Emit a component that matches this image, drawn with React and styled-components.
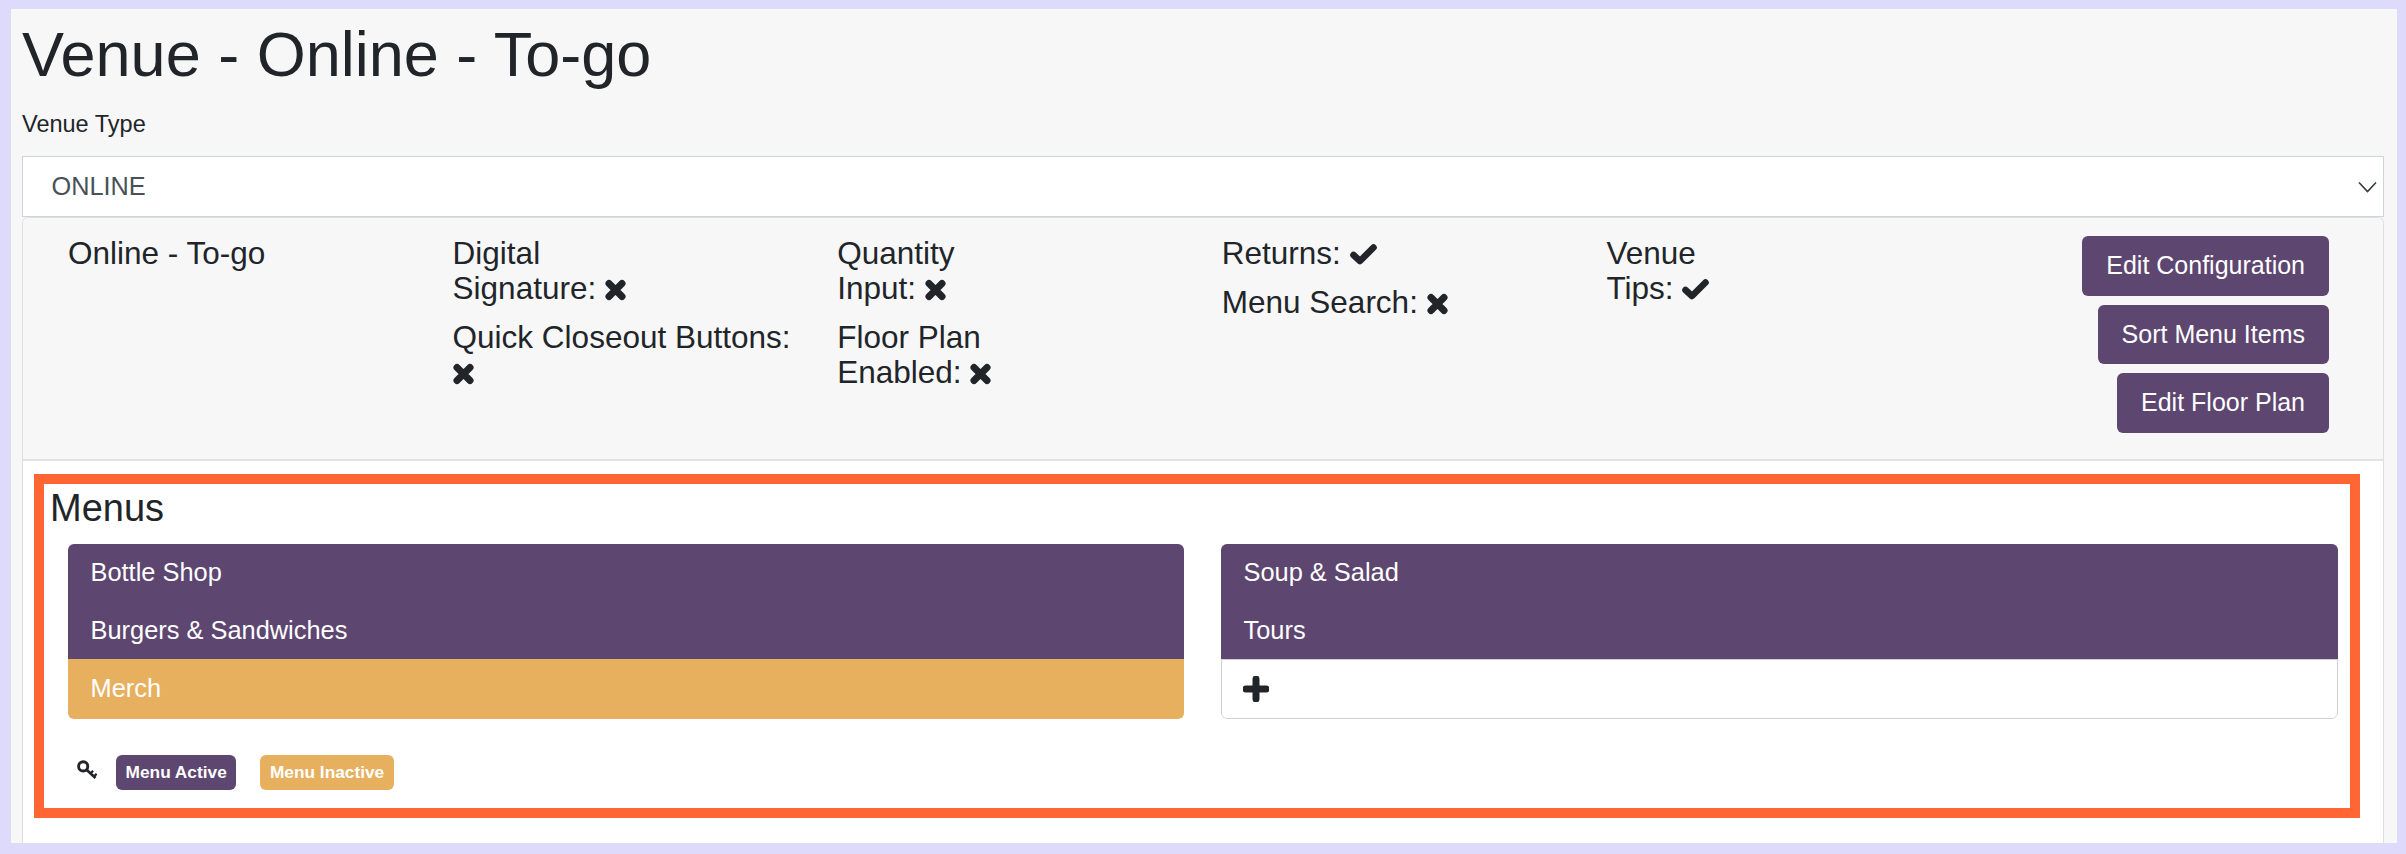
import styled, { createGlobalStyle } from "styled-components";

const GlobalStyle = createGlobalStyle`
  html, body {
    margin: 0;
    padding: 0;
  }
  body {
    font-family: "Liberation Sans", Arial, sans-serif;
    color: #212529;
  }
  * {
    box-sizing: border-box;
  }
`;

const purple = "#5d4670";
const gold = "#e7b05f";

// page frame
const Frame = styled.div`
  width: 2406px;
  height: 854px;
  overflow: hidden;
  border-style: solid;
  border-color: #dedafc;
  border-width: 9px 9px 11px 11px;
  background-color: #f7f7f7;
  padding: 7px 13px 0 11px;
  display: flex;
  flex-direction: column;
`;

const Title = styled.h1`
  margin: 0 0 14px;
  font-size: 63px;
  font-weight: 400;
  line-height: 77px;
`;

const Label = styled.label`
  display: block;
  font-size: 23.5px;
  line-height: 34px;
  margin-bottom: 15px;
`;

const Select = styled.div`
  height: 61px;
  flex-shrink: 0;
  background-color: #fff;
  border: 1.5px solid #ced4da;
  padding: 0 6px 0 28.5px;
  display: flex;
  align-items: center;
  justify-content: space-between;
  font-size: 25.3px;
  color: #495057;
`;

// venue card
const Card = styled.div`
  flex: 1;
  display: flex;
  flex-direction: column;
  background-color: #fff;
  border: 1px solid #dfdfdf;
  border-bottom: none;
  border-radius: 6px 6px 0 0;
`;

const CardHeader = styled.div`
  height: 243px;
  flex-shrink: 0;
  background-color: #f7f7f7;
  border-bottom: 2px solid #e2e2e2;
  border-radius: 6px 6px 0 0;
  padding: 18px 54px 0 45px;
  display: grid;
  grid-template-columns: repeat(4, 384.6px) 1fr auto;
`;

const Column = styled.div`
  display: flex;
  flex-direction: column;
  gap: 14px;
  font-size: 31.5px;
  line-height: 35px;
`;

const Setting = styled.div`
  white-space: nowrap;
`;

const Mark = styled.svg`
  vertical-align: ${(p) => p.$drop}px;
`;

const Actions = styled.div`
  display: flex;
  flex-direction: column;
  align-items: flex-end;
  gap: 9px;
`;

const ActionButton = styled.button`
  height: 59.5px;
  padding: 0 24px;
  border: none;
  border-radius: 6px;
  background-color: ${purple};
  color: #fff;
  font-family: inherit;
  font-size: 25px;
`;

const CardBody = styled.div`
  flex: 1;
  padding: 13px 23px 25px 11px;
`;

const Highlight = styled.section`
  height: 344px;
  border: 10px solid #ff6633;
  padding: 1px 13px 0 24px;
`;

const Heading = styled.h4`
  margin: 0 0 12px -18px;
  font-size: 38px;
  font-weight: 400;
  line-height: 47px;
`;

const Lists = styled.div`
  display: grid;
  grid-template-columns: 1116px 1117px;
  column-gap: 37px;
`;

const List = styled.ul`
  list-style: none;
  margin: 0;
  padding: 0;
  border-radius: 6px;
  overflow: hidden;
`;

const Item = styled.li`
  height: ${(p) => (p.$last ? "60px" : "57.5px")};
  padding: ${(p) => (p.$last ? "11px" : "10px")} 22.5px 0;
  font-size: 25.4px;
  line-height: 36px;
  color: #fff;
  background-color: ${(p) => (p.$inactive ? gold : purple)};
`;

const AddItem = styled.li`
  height: 60px;
  padding: 0 21px;
  display: flex;
  align-items: center;
  background-color: #fff;
  border: 1.5px solid #cfcfcf;
  border-top-width: 1px;
  border-radius: 0 0 6px 6px;
`;

const Legend = styled.div`
  display: flex;
  align-items: center;
  margin-top: 36px;
  padding-left: 9px;
`;

const KeyMark = styled.svg`
  margin-bottom: 5px;
`;

const Badge = styled.span`
  height: 35px;
  margin-left: ${(p) => p.$gap}px;
  padding: 0 9.6px;
  display: inline-flex;
  align-items: center;
  border-radius: 6px;
  background-color: ${(p) => (p.$inactive ? gold : purple)};
  color: #fff;
  font-size: 17.3px;
  font-weight: 700;
`;

const Chevron = () => (
  <svg width="19" height="12" viewBox="0 0 19 12" fill="none">
    <path d="M1 1.5l8.5 9 8.5-9" stroke="#343a40" strokeWidth="1.6" />
  </svg>
);

const KeyIcon = () => (
  <KeyMark width="20" height="20" viewBox="0 0 20 20" fill="none" stroke="#212529">
    <circle cx="6.2" cy="6.4" r="4.6" strokeWidth="2.9" />
    <path d="M9.5 9.8l9 8.2" strokeWidth="2.7" />
    <path d="M13.5 13.5l2.6-2.8M17 16.5l2.6-2.8" strokeWidth="2.2" />
  </KeyMark>
);

const No = () => (
  <Mark $drop={-2} width="21" height="22" viewBox="0 0 21 22" fill="none">
    <path
      d="M4 4.5l13 13M17 4.5l-13 13"
      stroke="#212529"
      strokeWidth="7"
      strokeLinecap="round"
    />
  </Mark>
);

const Yes = () => (
  <Mark $drop={-1} width="27" height="21" viewBox="0 0 27 21" fill="none">
    <path
      d="M3.5 11l6.5 6L23.5 3.5"
      stroke="#212529"
      strokeWidth="6.6"
      strokeLinecap="round"
      strokeLinejoin="round"
    />
  </Mark>
);

const PlusIcon = () => (
  <svg width="26" height="26" viewBox="0 0 26 26" fill="none">
    <path
      d="M3 13h20M13 3v20"
      stroke="#212529"
      strokeWidth="7"
      strokeLinecap="round"
    />
  </svg>
);

const App = () => {
  return (
    <>
      <GlobalStyle />
      <Frame>
        <Title>Venue - Online - To-go</Title>
        <Label>Venue Type</Label>
        <Select>
          ONLINE
          <Chevron />
        </Select>
        <Card>
          <CardHeader>
            <Column>
              <Setting>Online - To-go</Setting>
            </Column>
            <Column>
              <Setting>
                Digital
                <br />
                Signature: <No />
              </Setting>
              <Setting>
                Quick Closeout Buttons:
                <br />
                <No />
              </Setting>
            </Column>
            <Column>
              <Setting>
                Quantity
                <br />
                Input: <No />
              </Setting>
              <Setting>
                Floor Plan
                <br />
                Enabled: <No />
              </Setting>
            </Column>
            <Column>
              <Setting>
                Returns: <Yes />
              </Setting>
              <Setting>
                Menu Search: <No />
              </Setting>
            </Column>
            <Column>
              <Setting>
                Venue
                <br />
                Tips: <Yes />
              </Setting>
            </Column>
            <Actions>
              <ActionButton>Edit Configuration</ActionButton>
              <ActionButton>Sort Menu Items</ActionButton>
              <ActionButton>Edit Floor Plan</ActionButton>
            </Actions>
          </CardHeader>
          <CardBody>
            <Highlight>
              <Heading>Menus</Heading>
              <Lists>
                <List>
                  <Item>Bottle Shop</Item>
                  <Item>Burgers &amp; Sandwiches</Item>
                  <Item $inactive $last>
                    Merch
                  </Item>
                </List>
                <List>
                  <Item>Soup &amp; Salad</Item>
                  <Item>Tours</Item>
                  <AddItem>
                    <PlusIcon />
                  </AddItem>
                </List>
              </Lists>
              <Legend>
                <KeyIcon />
                <Badge $gap={19}>Menu Active</Badge>
                <Badge $gap={24} $inactive>
                  Menu Inactive
                </Badge>
              </Legend>
            </Highlight>
          </CardBody>
        </Card>
      </Frame>
    </>
  );
};

export default App;
